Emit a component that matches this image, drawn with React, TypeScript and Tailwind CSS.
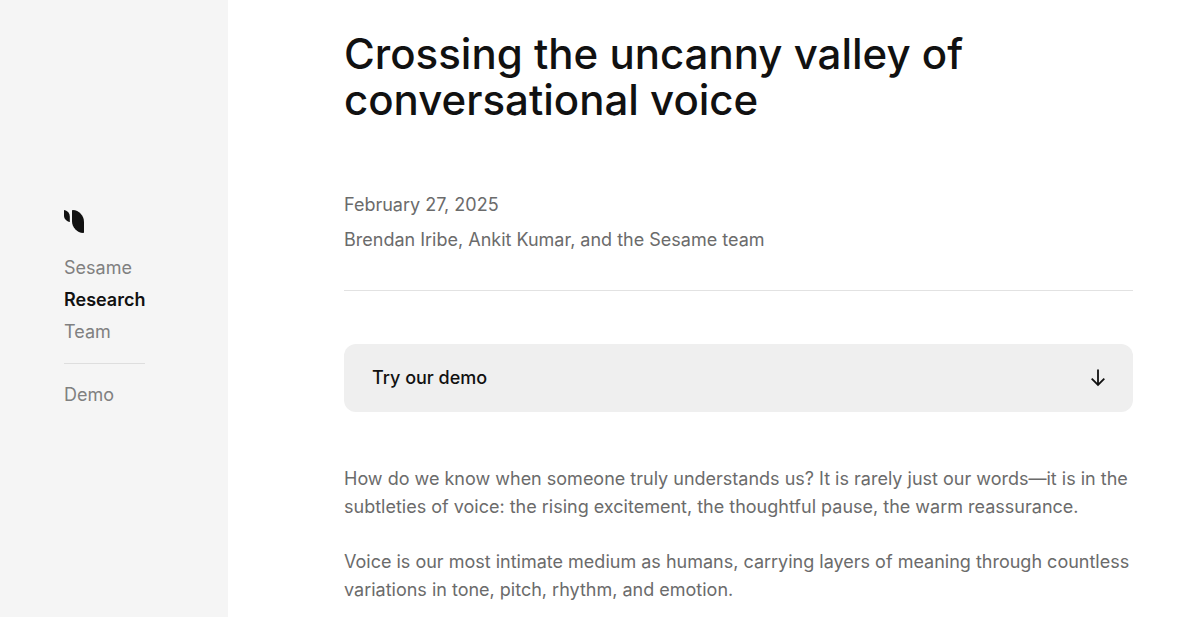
const navLinks = [
	{ label: "Sesame", href: "#sesame", active: false },
	{ label: "Research", href: "#research", active: true },
	{ label: "Team", href: "#team", active: false },
];

function Logo() {
	return (
		<svg
			aria-hidden="true"
			className="w-5 h-6"
			fill="currentColor"
			viewBox="0 0 20 24"
		>
			<path d="M0 1.4Q0 .9 .6 1C3.600 1.800 5.800 4.200 5.800 7.400V12.400Q5.800 13 5.200 12.900C2.200 12.200 0 9.800 0 6.600Z" />
			<path d="M8 1.800Q8 1 8.800 1C15 1.400 20 6.400 20 13V23.200Q20 24 19.200 24C13 23.600 8 18.600 8 12Z" />
		</svg>
	);
}

function ArrowDown() {
	return (
		<svg
			aria-hidden="true"
			className="w-3.5 h-4.5"
			fill="none"
			stroke="currentColor"
			strokeWidth="1.8"
			viewBox="0 0 14 18"
		>
			<path d="M7 .500v15.500M.700 9.700 7 16l6.300-6.300" />
		</svg>
	);
}

function Sidebar() {
	return (
		<aside className="w-57 shrink-0 bg-[#f5f5f5] pl-16 pt-0.5 flex items-center text-[#808080]">
			<nav className="flex flex-col items-start leading-8">
				<a aria-label="Home" className="mb-[19px] text-[#111]" href="#home">
					<Logo />
				</a>
				<ul>
					{navLinks.map((link) => (
						<li key={link.label}>
							<a
								className={link.active ? "font-semibold text-[#111]" : ""}
								href={link.href}
							>
								{link.label}
							</a>
						</li>
					))}
				</ul>
				<hr className="w-full mt-[15px] mb-[15px] border-[#dedede]" />
				<a href="#demo">Demo</a>
			</nav>
		</aside>
	);
}

export default function ResearchPage() {
	return (
		<div className="flex min-h-screen bg-white font-['Inter',sans-serif] text-lg">
			<Sidebar />
			<main className="flex-1 pl-29 pr-[67px] pt-[31px] text-[#6b6b6b]">
				<h1 className="text-[42px] leading-[46px] font-[450] text-[#111]">
					Crossing the uncanny valley of
					<br />
					conversational voice
				</h1>
				<div className="mt-16 pb-[33px] border-b border-[#e2e2e2] leading-[35px]">
					<p>February 27, 2025</p>
					<p>Brendan Iribe, Ankit Kumar, and the Sesame team</p>
				</div>
				<button
					className="my-[53px] w-full h-17 px-7 flex items-center justify-between rounded-xl bg-[#efefef] text-[#111] font-medium"
					type="button"
				>
					Try our demo
					<ArrowDown />
				</button>
				<div className="space-y-[27px] leading-7">
					<p>
						How do we know when someone truly understands us? It is rarely just
						our words—it is in the
						<br />
						subtleties of voice: the rising excitement, the thoughtful pause,
						the warm reassurance.
					</p>
					<p>
						Voice is our most intimate medium as humans, carrying layers of
						meaning through countless
						<br />
						variations in tone, pitch, rhythm, and emotion.
					</p>
				</div>
			</main>
		</div>
	);
}
